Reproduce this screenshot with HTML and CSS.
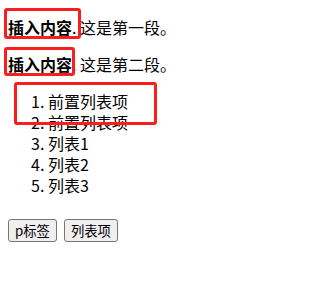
FILE: index.html
```html
<!DOCTYPE html>
<html lang="zh">
<head>
<meta charset="utf-8">
<link rel="stylesheet" href="styles.css">
</head>
<body>
<p class="para"><b>插入内容</b>. 这是第一段。</p>
<p class="para"><b>插入内容</b>. 这是第二段。</p>
<ol class="list">
  <li class="item">前置列表项</li>
  <li class="item">前置列表项</li>
  <li class="item">列表1</li>
  <li class="item">列表2</li>
  <li class="item">列表3</li>
</ol>
<div class="actions">
  <button class="btn">p标签</button>
  <button class="btn">列表项</button>
</div>
<div class="mark mark-1"></div>
<div class="mark mark-2"></div>
<div class="mark mark-3"></div>
</body>
</html>
```

FILE: styles.css
```css
html, body {
  background: #fff;
}
body {
  margin: 8px;
  font-family: "Noto Sans CJK SC", "Noto Sans", sans-serif;
  font-size: 16px;
  line-height: 21px;
  color: #000;
}
.para {
  margin: 16px 0;
  line-height: 7px;
  padding-bottom: 14px;
}
.list {
  margin: 16px 0;
  padding-left: 40px;
}
.item {
  line-height: 7px;
  padding-bottom: 14px;
}
.actions {
  display: flex;
  gap: 7px;
}
.btn {
  font-family: "Noto Sans CJK SC", "Noto Sans", sans-serif;
  font-size: 13.33px;
  line-height: 19px;
  padding: 1px 6px;
  background: #efefef;
  border: 1px solid #767676;
  border-radius: 3px;
  color: #000;
}
.mark {
  position: absolute;
  border: 3px solid #fa1e1e;
  border-radius: 3px;
  box-sizing: border-box;
}
.mark-1 { left: 4px; top: 8px; width: 77px; height: 31px; }
.mark-2 { left: 4px; top: 47px; width: 71px; height: 29px; }
.mark-3 { left: 14px; top: 82px; width: 143px; height: 43px; }
```
